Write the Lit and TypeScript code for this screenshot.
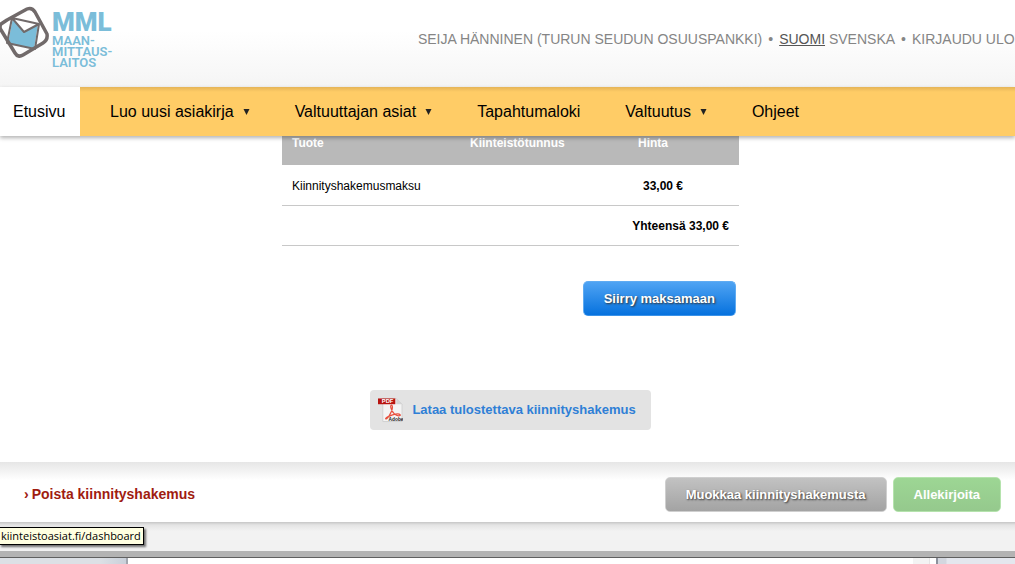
import { LitElement, html, css, svg } from "lit";
import { customElement } from "lit/decorators.js";

const NAV = [
  { label: "Luo uusi asiakirja", menu: true },
  { label: "Valtuuttajan asiat", menu: true },
  { label: "Tapahtumaloki", menu: false },
  { label: "Valtuutus", menu: true },
  { label: "Ohjeet", menu: false },
];

const logoMark = html`<svg class="mark" viewBox="0 0 50 60" aria-hidden="true">
  ${svg`<path d="M13 18L24 32L38 24L34 49L8 43Z" fill="#7bbdd9"/>
  <g fill="none" stroke="#716a6a" stroke-linejoin="round">
    <path d="M1 24Q-1 27 1 30L15 53Q18 58 23 55L43 43Q48 40 47 34L35 12Q32 7 27 9L7 20Z" stroke-width="3.500"/>
    <path d="M12 18L7 43L35 49L39 24ZL24 32L39 24" stroke-width="2"/>
  </g>`}
</svg>`;

const pdfIcon = html`<svg class="pdf" viewBox="0 0 26 26" aria-hidden="true">
  <path d="M5 1H19L25 7V25H5Z" fill="#f4f4f4" stroke="#d0d0d0" />
  <path d="M19 1V7H25Z" fill="#d4d4d4" />
  <path
    d="M14 8C12 8 14 14 17 17C20 20 24 19 23 18C21 15 9 20 8 22C9 24 15 15 15 10Q15 8 14 8"
    fill="none" stroke="#e8503f" stroke-width="1.300" />
  <rect x="0" y="1" width="18" height="6" fill="#b8130f" />
  <text x="4" y="6" font-size="6" font-weight="700" fill="#fff">PDF</text>
  <text x="11" y="24" font-size="5" font-weight="700" fill="#222">Adobe</text>
</svg>`;

@customElement("app-root")
export class AppRoot extends LitElement {
  static styles = css`
    :host {
      display: block;
      position: relative;
      overflow: hidden;
      height: 100vh;
      background: #fff;
      color: #000;
      font-family: "Liberation Sans", Arial, sans-serif;
      font-size: 12px;
    }
    * { box-sizing: border-box; }
    a { color: inherit; text-decoration: none; }
    .page { display: flex; flex-direction: column; min-height: 100vh; }
    .header {
      display: flex;
      justify-content: space-between;
      height: 87px;
      overflow: hidden;
      background: linear-gradient(#fff 35%, #f5f5f5);
    }
    .logo {
      display: flex;
      gap: 2px;
      color: #7bbdd9;
      font-family: Roboto, sans-serif;
      font-weight: 700;
    }
    .mark { width: 50px; height: 60px; }
    .words { display: flex; flex-direction: column; font-size: 13px; line-height: 11px; padding-top: 10px; font-weight: 600; }
    .words strong { font-size: 26px; line-height: 25px; font-weight: 900; }
    .user {
      display: flex;
      gap: 6px;
      margin: 31px -9px 0 0;
      font-size: 14px;
      line-height: 16px;
      color: #858585;
      white-space: nowrap;
    }
    .current { color: #555; text-decoration: underline; }
    .nav {
      position: relative;
      z-index: 1;
      display: flex;
      gap: 45px;
      height: 49px;
      background: linear-gradient(#e5b559, #ffcc66 5px);
      box-shadow: 0 2px 4px rgba(0, 0, 0, 0.3);
      font-size: 16px;
      line-height: 49px;
      white-space: nowrap;
    }
    .home { background: #fff; padding: 0 15px 0 13px; width: 80px; margin-right: -15px; }
    .item { display: flex; align-items: center; gap: 9px; }
    .arrow { width: 7px; height: 6px; fill: #222; }
    .main { padding-left: 6px; flex: 1; }
    .content { width: 457px; margin: 0 auto; display: flex; flex-direction: column; }
    .table { border-collapse: collapse; table-layout: fixed; width: 100%; line-height: 14px; }
    .table th { height: 29px; padding: 0 10px; background: #b9b9b9; color: #fff; text-align: left; vertical-align: top; }
    .table td { height: 40px; padding: 2px 10px 0; border-bottom: 1px solid #c8c8c8; }
    .product { width: 178px; }
    .estate { width: 168px; }
    .table .price { padding-left: 15px; font-weight: 700; }
    .table .total { text-align: right; font-weight: 700; }
    .btn {
      height: 35px;
      padding: 0 20px;
      border: 1px solid;
      border-radius: 5px;
      color: #fff;
      font: 700 13px "Liberation Sans", Arial, sans-serif;
      text-shadow: 1px 1px 2px #333;
      white-space: nowrap;
    }
    .pay {
      align-self: flex-end;
      margin: 35px 3px 0 0;
      border-color: #5fabf2 #5fabf2 #3a92e8;
      background: linear-gradient(#4fa3f3, #0672de);
    }
    .download {
      align-self: center;
      display: flex;
      align-items: center;
      gap: 9px;
      height: 40px;
      margin: 74px 0 32px;
      padding: 0 15px 0 8px;
      border-radius: 4px;
      background: #e3e3e3;
      color: #2f7fd6;
      font-size: 13px;
      font-weight: 700;
      white-space: nowrap;
    }
    .pdf { width: 25px; height: 26px; }
    .actions {
      display: flex;
      align-items: center;
      gap: 6px;
      height: 60px;
      padding: 4px 14px 0 24px;
      background: linear-gradient(#e6e6e6, #fff 18px);
    }
    .remove { display: flex; gap: 3px; margin-right: auto; color: #a01c10; font-size: 14px; font-weight: 700; }
    .edit { border-color: #cfcfcf; background: linear-gradient(#c2c2c2, #a3a3a3); }
    .sign { border-color: #b5e3ad; background: linear-gradient(#9dd694, #95c98d); text-shadow: none; }
    .foot {
      height: 29px;
      background: linear-gradient(#c6c6c6, #e4e4e4 3px, #f2f2f2 9px);
    }
    .frame { height: 7px; background: #b3b3b3; border-bottom: 1px solid #606060; }
    .behind {
      display: grid;
      grid-template-columns: 128px 1fr 17px 6px 79px;
      height: 6px;
      background: #fff;
    }
    .left { background: linear-gradient(90deg, #dce0e5 80%, #c9d0da); border-right: 2px solid #a2a7b0; }
    .scroll { background: #f3f3f3; border-right: 1px solid #e4e4e4; }
    .right { background: linear-gradient(90deg, #d3d7df 8px, #e4e7ee 9px); border-left: 2px solid #8d929d; }
    .tip {
      position: absolute;
      left: -1px;
      bottom: 19px;
      height: 18px;
      padding: 0 2px 0 1px;
      border: 1px solid #000;
      background: #ffffe1;
      box-shadow: 2px 2px 2px rgba(0, 0, 0, 0.55);
      font: 11px/16px "Open Sans", sans-serif;
    }
  `;

  render() {
    return html`<div class="page">
      <header class="header">
        <a class="logo" href="#">
          ${logoMark}
          <span class="words"><strong>MML</strong><span>MAAN-</span><span>MITTAUS-</span><span>LAITOS</span></span>
        </a>
        <div class="user">
          <span>SEIJA HÄNNINEN (TURUN SEUDUN OSUUSPANKKI)</span><span>•</span>
          <span><a class="current" href="#">SUOMI</a> <a href="#">SVENSKA</a></span><span>•</span>
          <a href="#">KIRJAUDU ULOS</a>
        </div>
      </header>
      <nav class="nav">
        <a class="home" href="#">Etusivu</a>
        ${NAV.map(
          (n) => html`<a class="item" href="#">${n.label}${n.menu
            ? html`<svg class="arrow" viewBox="0 0 7 6" aria-hidden="true"><path d="M0.500 0H6.500L3.500 6Z" /></svg>`
            : null}</a>`
        )}
      </nav>
      <main class="main">
        <div class="content">
          <table class="table">
            <thead>
              <tr><th class="product">Tuote</th><th class="estate">Kiinteistötunnus</th><th>Hinta</th></tr>
            </thead>
            <tbody>
              <tr><td>Kiinnityshakemusmaksu</td><td></td><td class="price">33,00 €</td></tr>
              <tr><td class="total" colspan="3">Yhteensä 33,00 €</td></tr>
            </tbody>
          </table>
          <button class="btn pay">Siirry maksamaan</button>
          <a class="download" href="#">${pdfIcon}Lataa tulostettava kiinnityshakemus</a>
        </div>
      </main>
      <section class="actions">
        <a class="remove" href="#"><span>›</span>Poista kiinnityshakemus</a>
        <button class="btn edit">Muokkaa kiinnityshakemusta</button>
        <button class="btn sign">Allekirjoita</button>
      </section>
      <div class="foot"></div>
      <div class="frame"></div>
      <div class="behind">
        <div class="left"></div><div></div><div class="scroll"></div><div></div><div class="right"></div>
      </div>
      <div class="tip" role="tooltip">kiinteistoasiat.fi/dashboard</div>
    </div>`;
  }
}
